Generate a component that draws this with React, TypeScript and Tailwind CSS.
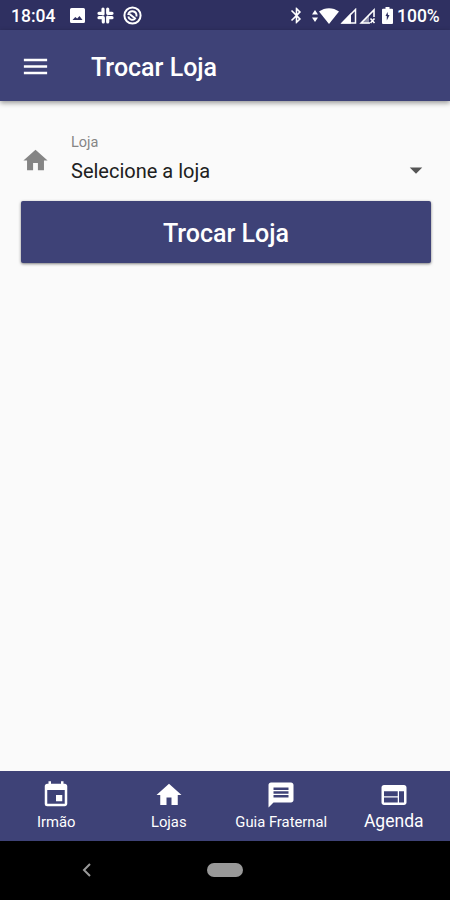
import React from 'react';
import { MdArrowDropDown, MdBluetooth, MdEvent, MdHome, MdMenu, MdMessage, MdWeb } from 'react-icons/md';

const StatusBar: React.FC = () => (
  <div className="flex h-[30px] shrink-0 items-center bg-[#2f3061] pt-px text-white">
    <span className="ml-[11px] w-[59px] text-[17.5px] leading-5 font-medium">18:04</span>
    <svg width="15" height="15" viewBox="0 0 15 15" fill="currentColor" fillRule="evenodd">
      <path d="M1.5 0h12q1.5 0 1.5 1.5v12q0 1.5-1.5 1.5h-12Q0 15 0 13.5v-12Q0 0 1.5 0zM2.5 12h10L9.5 8 7.2 10.5 5.3 9z" />
    </svg>
    <svg className="ml-[12px]" width="17" height="17" viewBox="0 0 17 17" stroke="currentColor" strokeWidth="3.2" strokeLinecap="round">
      <path d="M6 2v5M2 6.3h4M10.7 2v4.3M10.7 6.3H15M6.3 10.7V15M2 10.7h4.3M10.7 10v5M10.7 10.7H15" />
    </svg>
    <svg className="ml-[9px]" width="19" height="19" viewBox="0 0 19 19" fill="none" stroke="currentColor">
      <circle cx="9.5" cy="9.5" r="8.1" strokeWidth="2" />
      <path d="M13.5 10.5C14 4 5.5 3.5 5.2 9M6.5 8l6.3 5M5.3 10.5c.7 3.5 4.5 4 6.5 2.5" strokeWidth="1.9" />
    </svg>
    <MdBluetooth className="ml-[145px]" size={19} />
    <svg className="ml-[6px]" width="6" height="14" viewBox="0 0 6 14" fill="currentColor">
      <path d="M3 1l3 4.500H0zM3 13l3-4.500H0z" />
    </svg>
    <svg className="ml-px" width="20" height="16" viewBox="0 0 20 16" fill="currentColor">
      <path d="M0 3.5C6-1 14-1 20 3.5L10 16z" />
    </svg>
    <svg className="ml-px" width="17" height="16" viewBox="0 0 17 16">
      <path d="M2.2 15H15.5V1.5z" fill="none" stroke="currentColor" strokeWidth="1.5" />
      <path d="M1 15.5h10V5z" fill="currentColor" />
    </svg>
    <svg className="ml-[2px]" width="17" height="16" viewBox="0 0 17 16">
      <path d="M11 15H2.2L15 2v7" fill="none" stroke="currentColor" strokeWidth="1.6" />
      <path d="M2 15.5h8V7z" fill="currentColor" opacity=".45" />
      <path d="M11.5 10.5l4 4.5M15.5 10.5l-4 4.5" stroke="currentColor" strokeWidth="1.6" />
    </svg>
    <svg className="ml-[6px]" width="11" height="17" viewBox="0 0 11 17" fill="currentColor" fillRule="evenodd">
      <path d="M3.5 0h4v1.7H10q1 0 1 1V16q0 1-1 1H1q-1 0-1-1V2.7q0-1 1-1h2.5zM5.5 5l-2 4h1.3v4.500l2.700-5.500H6z" />
    </svg>
    <span className="ml-[4px] text-[17.5px] leading-5 font-medium">100%</span>
  </div>
);

const Header: React.FC = () => (
  <header className="flex h-[71px] shrink-0 items-center bg-[#3e4277] pt-px text-white shadow-[0_2px_5px_rgba(0,0,0,0.4)]">
    <MdMenu className="ml-5" size={31} />
    <h1 className="ml-10 pt-[3px] text-[25px] font-medium">Trocar Loja</h1>
  </header>
);

const tabs = [
  { label: 'Irmão', icon: MdEvent, text: 'pt-px text-[14.8px]' },
  { label: 'Lojas', icon: MdHome, text: 'pt-px text-[14.8px]' },
  { label: 'Guia Fraternal', icon: MdMessage, text: 'pt-px text-[14.8px]' },
  { label: 'Agenda', icon: MdWeb, text: 'text-[17.5px]' },
];

const App: React.FC = () => (
  <div className="flex h-[900px] w-[450px] flex-col overflow-hidden bg-[#fafafa] font-['Roboto',sans-serif]">
    <StatusBar />
    <Header />

    <main className="flex-1 pt-[33px] pr-[19px] pl-[21px]">
      <div className="flex h-[67px]">
        <MdHome className="mt-[12px] text-[#858585]" size={29} />
        <div className="ml-[21px]">
          <p className="text-[14.5px] leading-[18px] text-[#858585]">Loja</p>
          <p className="mt-[7px] text-[20px] leading-6 text-[#202020]">Selecione a loja</p>
        </div>
        <MdArrowDropDown className="mt-[21px] ml-auto text-[#555555]" size={30} />
      </div>
      <button className="block h-[62px] w-full rounded-[2px] bg-[#3e4277] pt-[3px] text-[25px] font-medium text-white shadow-[0_1px_3px_rgba(0,0,0,0.5)]">
        Trocar Loja
      </button>
    </main>

    <nav className="grid h-[70px] shrink-0 grid-cols-4 bg-[#3e4277] text-white">
      {tabs.map(({ label, icon: Icon, text }) => (
        <div key={label} className="flex flex-col items-center pt-[9px]">
          <Icon size={30} />
          <span className={`${text} leading-[22px] whitespace-nowrap`}>{label}</span>
        </div>
      ))}
    </nav>

    <div className="flex h-[59px] shrink-0 items-center bg-black pb-px">
      <svg className="ml-[82px]" width="10" height="14" viewBox="0 0 10 14" fill="none" stroke="#999999" strokeWidth="2">
        <path d="M8 1L2 7l6 6" />
      </svg>
      <div className="ml-[115px] h-[14px] w-9 rounded-full bg-[#999999]" />
    </div>
  </div>
);

export default App;
